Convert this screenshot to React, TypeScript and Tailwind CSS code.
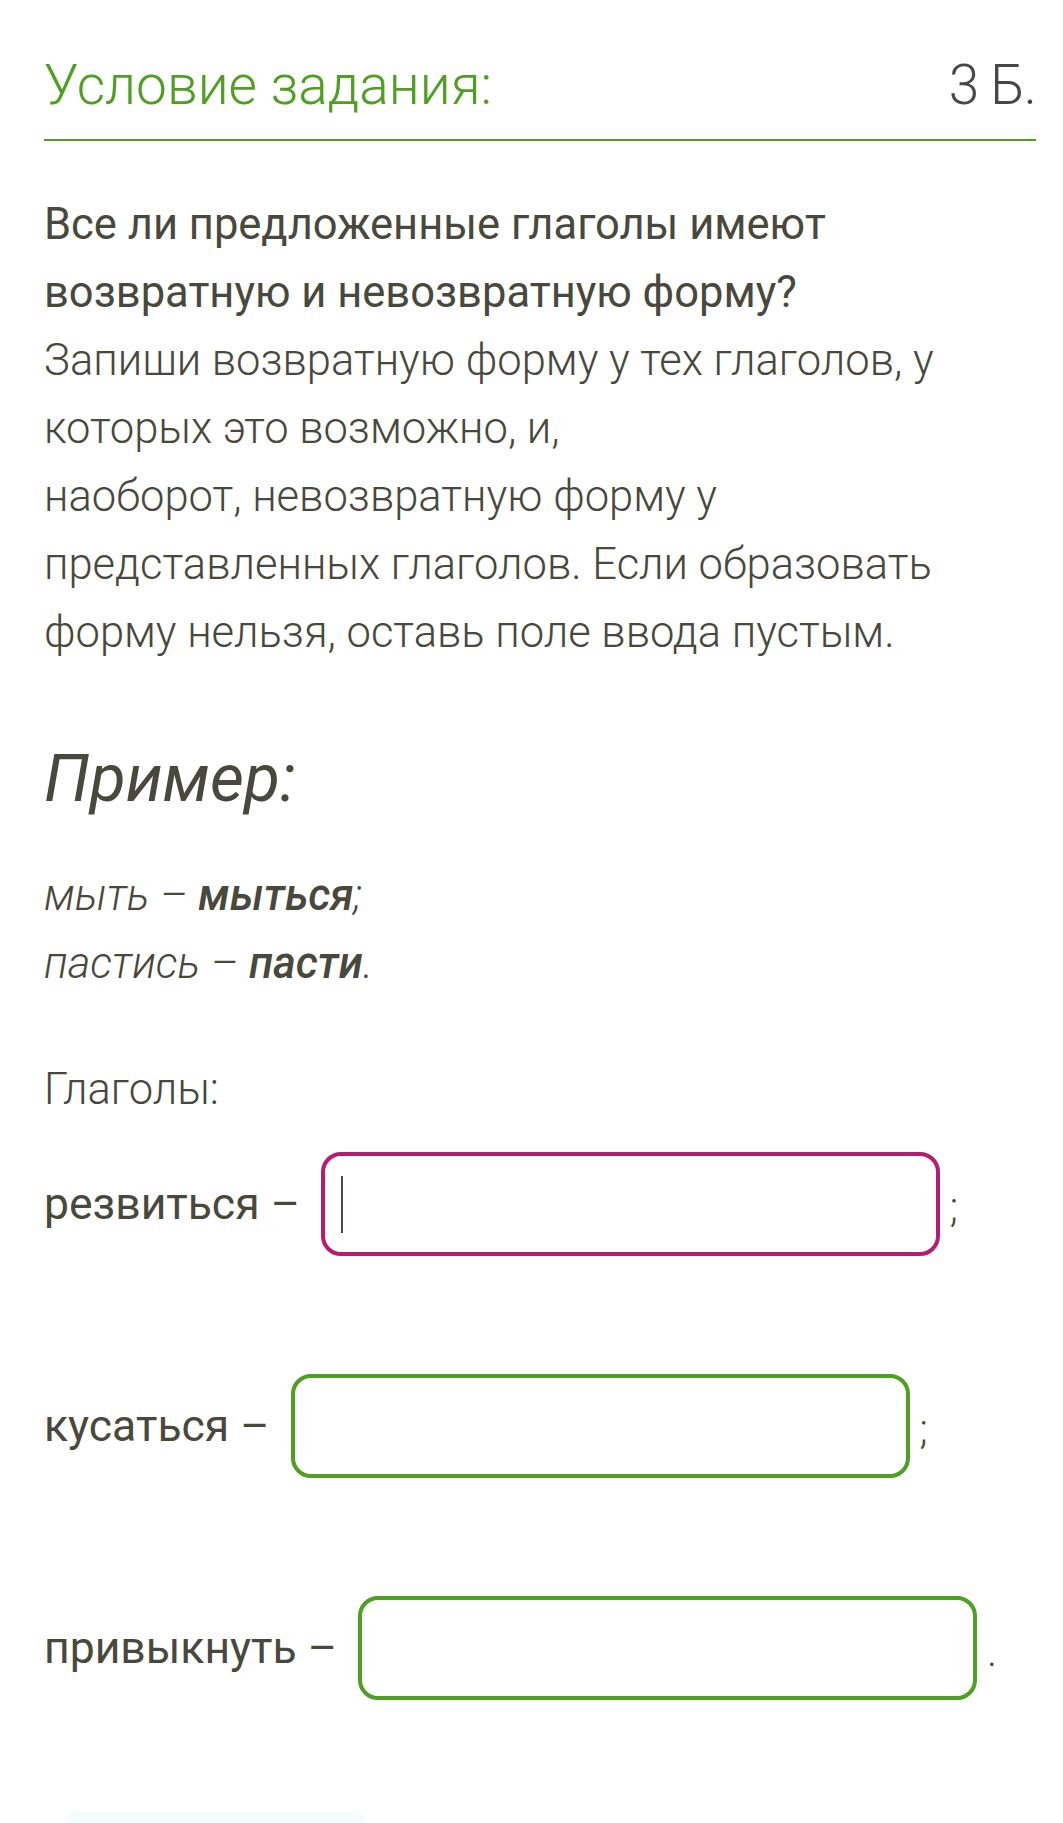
import React from "react";

const paragraphBold = [
  "Все ли предложенные глаголы имеют",
  "возвратную и невозвратную форму?",
];

const paragraphLines = [
  "Запиши возвратную форму у тех глаголов, у",
  "которых это возможно, и,",
  "наоборот, невозвратную форму у",
  "представленных глаголов. Если образовать",
  "форму нельзя, оставь поле ввода пустым.",
];

interface AnswerRowProps {
  label: string;
  end: string;
  active?: boolean;
}

function AnswerRow({ label, end, active }: AnswerRowProps) {
  return (
    <div className="flex items-center h-[104px]">
      <span className="font-normal whitespace-nowrap">{label} –</span>
      <div
        className={
          active
            ? "ml-[21px] w-[619px] h-[104px] rounded-[20px] border-[4px] border-[#b71c73] flex items-center pl-[16px]"
            : "ml-[21px] w-[619px] h-[104px] rounded-[20px] border-[4px] border-[#4f9f22] flex items-center pl-[16px]"
        }
      >
        {active && <span className="block w-[2px] h-[57px] bg-[#4a4a45]" />}
      </div>
      <span className="ml-[10px] font-light self-end mb-[14px] text-[42px]">{end}</span>
    </div>
  );
}

export default function App() {
  return (
    <div
      className="w-[1063px] h-[1823px] overflow-hidden bg-white pl-[44px] pr-[27px] text-[#48483d]"
      style={{ fontFamily: "Roboto, 'Noto Sans', sans-serif" }}
    >
      <div className="flex justify-between items-start pt-[50px] pb-[19px] border-b-2 border-[#4f9f22] text-[55px] leading-[70px] font-light">
        <span className="text-[#4f9f22]">Условие задания:</span>
        <span className="text-[#474747] tracking-[-1px]">
          3<span className="inline-block w-[12px]" />Б.
        </span>
      </div>

      <div className="mt-[50px] text-[43.5px] leading-[68px]">
        {paragraphBold.map((line) => (
          <div key={line} className="font-normal whitespace-nowrap">
            {line}
          </div>
        ))}
        {paragraphLines.map((line) => (
          <div key={line} className="font-light whitespace-nowrap">
            {line}
          </div>
        ))}
      </div>

      <div className="mt-[72px] text-[66px] leading-[80px] italic font-normal">
        Пример:
      </div>

      <div className="mt-[43px] text-[43.5px] leading-[68px] italic font-light">
        <div>
          мыть – <span className="font-medium">мыться</span>;
        </div>
        <div>
          пастись – <span className="font-medium">пасти</span>.
        </div>
      </div>

      <div className="mt-[58px] text-[43.5px] leading-[68px] font-light">
        Глаголы:
      </div>

      <div className="mt-[28px] flex flex-col gap-[118px] text-[44.5px] leading-[68px]">
        <AnswerRow label="резвиться" end=";" active />
        <AnswerRow label="кусаться" end=";" />
        <AnswerRow label="привыкнуть" end="." />
      </div>

      <div className="mt-[112px] ml-[19px] w-[304px] h-[60px] rounded-[14px] bg-[#f4fcfc]" />
    </div>
  );
}
